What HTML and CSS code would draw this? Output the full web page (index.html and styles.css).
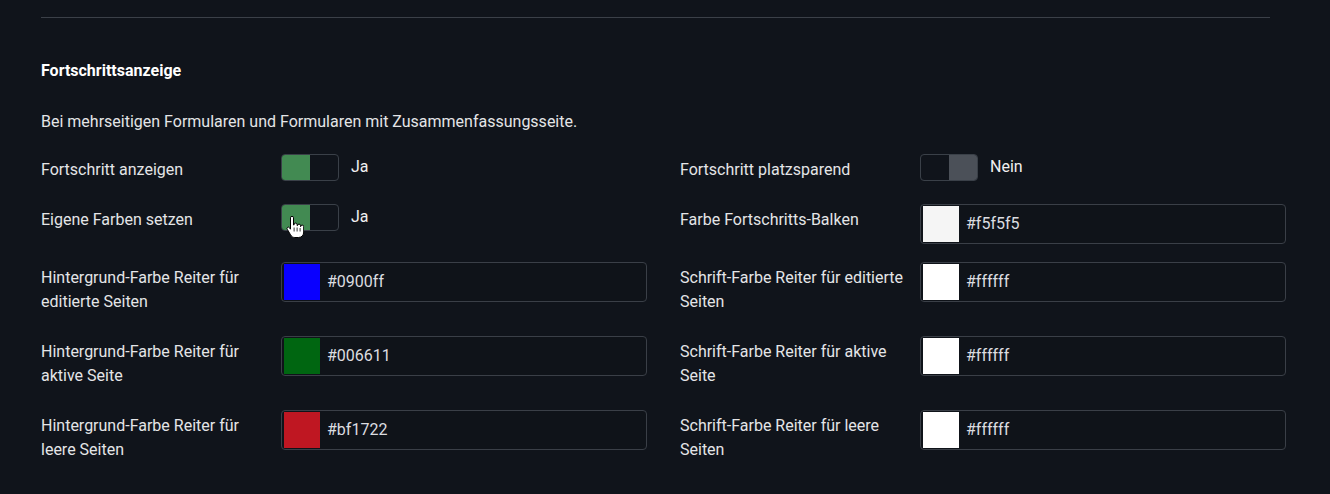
FILE: index.html
```html
<!DOCTYPE html>
<html lang="de">
<head>
  <meta charset="UTF-8" />
  <meta name="viewport" content="width=device-width, initial-scale=1.0"/>
  <title>Fortschrittsanzeige</title>
  <link rel="stylesheet" href="styles.css">
</head>
<body>

  <main class="page">
    <hr class="divider">

    <h3 class="section-title">Fortschrittsanzeige</h3>
    <p class="section-desc">Bei mehrseitigen Formularen und Formularen mit Zusammenfassungsseite.</p>

    <div class="form-row">
      <div class="field">
        <label class="field-label">Fortschritt anzeigen</label>
        <div class="field-control">
          <span class="switch on"><span class="switch-on"></span><span class="switch-off"></span></span>
          <span class="switch-text">Ja</span>
        </div>
      </div>
      <div class="field">
        <label class="field-label">Fortschritt platzsparend</label>
        <div class="field-control">
          <span class="switch off"><span class="switch-on"></span><span class="switch-off"></span></span>
          <span class="switch-text">Nein</span>
        </div>
      </div>
    </div>

    <div class="form-row">
      <div class="field">
        <label class="field-label">Eigene Farben setzen</label>
        <div class="field-control">
          <span class="switch on"><span class="switch-on"></span><span class="switch-off"></span></span>
          <span class="switch-text">Ja</span>
          <!-- mouse pointer from the screenshot -->
          <svg class="cursor" width="18" height="23" viewBox="0 0 18 23">
            <path d="M4.5 1.8a1.5 1.5 0 0 1 3 0V9h.6V8.6a1.5 1.5 0 0 1 3 0v1h.4a1.5 1.5 0 0 1 3 0v1h.2a1.5 1.5 0 0 1 3 0V16c0 3.2-2 5.5-5.2 5.5H8.8c-2 0-3.2-1-4.2-2.6L1.3 13.3a1.3 1.3 0 0 1 2.1-1.6L4.5 13.2Z" fill="#fff" stroke="#000" stroke-width="1"/>
            <path d="M8.1 11.5v4M11.1 11.5v4M14.1 12v3.5" stroke="#000" stroke-width=".8"/>
          </svg>
        </div>
      </div>
      <div class="field">
        <label class="field-label">Farbe Fortschritts-Balken</label>
        <div class="field-control">
          <div class="color-input">
            <span class="swatch" style="background:#f5f5f5"></span>
            <span class="color-value">#f5f5f5</span>
          </div>
        </div>
      </div>
    </div>

    <div class="form-row">
      <div class="field">
        <label class="field-label">Hintergrund-Farbe Reiter für editierte Seiten</label>
        <div class="field-control">
          <div class="color-input">
            <span class="swatch" style="background:#0900ff"></span>
            <span class="color-value">#0900ff</span>
          </div>
        </div>
      </div>
      <div class="field">
        <label class="field-label">Schrift-Farbe Reiter für editierte Seiten</label>
        <div class="field-control">
          <div class="color-input">
            <span class="swatch" style="background:#ffffff"></span>
            <span class="color-value">#ffffff</span>
          </div>
        </div>
      </div>
    </div>

    <div class="form-row">
      <div class="field">
        <label class="field-label">Hintergrund-Farbe Reiter für aktive Seite</label>
        <div class="field-control">
          <div class="color-input">
            <span class="swatch" style="background:#006611"></span>
            <span class="color-value">#006611</span>
          </div>
        </div>
      </div>
      <div class="field">
        <label class="field-label">Schrift-Farbe Reiter für aktive Seite</label>
        <div class="field-control">
          <div class="color-input">
            <span class="swatch" style="background:#ffffff"></span>
            <span class="color-value">#ffffff</span>
          </div>
        </div>
      </div>
    </div>

    <div class="form-row">
      <div class="field">
        <label class="field-label">Hintergrund-Farbe Reiter für leere Seiten</label>
        <div class="field-control">
          <div class="color-input">
            <span class="swatch" style="background:#bf1722"></span>
            <span class="color-value">#bf1722</span>
          </div>
        </div>
      </div>
      <div class="field">
        <label class="field-label">Schrift-Farbe Reiter für leere Seiten</label>
        <div class="field-control">
          <div class="color-input">
            <span class="swatch" style="background:#ffffff"></span>
            <span class="color-value">#ffffff</span>
          </div>
        </div>
      </div>
    </div>
  </main>

</body>
</html>
```

FILE: styles.css
```css
* {
  box-sizing: border-box;
}

body {
  font-family: Roboto, "Liberation Sans", sans-serif;
  font-size: 16px;
  line-height: 24px;
  margin: 0;
  padding: 0;
  background-color: #10141b;
  color: #e4e5e7;
}

.page {
  width: 1286px;
  padding: 17px 0 0 41px;
}

.divider {
  margin: 0 16px 0 0;
  border: none;
  border-top: 1px solid #3b4048;
}

.section-title {
  margin: 41px 0 0;
  font-size: 16px;
  font-weight: bold;
  line-height: 24px;
  color: #fff;
}

.section-desc {
  margin: 27px 0 20px;
}

.form-row {
  display: grid;
  grid-template-columns: 1fr 1fr;
  column-gap: 33px;
  margin-bottom: 18px;
}

.field {
  display: grid;
  grid-template-columns: 240px 1fr;
  align-items: start;
}

.field-label {
  padding: 4px 12px 4px 0;
}

.field-control {
  display: flex;
  align-items: center;
  gap: 12px;
  position: relative;
}

/* toggle switch */
.switch {
  display: flex;
  width: 58px;
  height: 27px;
  border: 1px solid #3a4048;
  border-radius: 4px;
  overflow: hidden;
}

.switch-on,
.switch-off {
  flex: 1;
}

.switch.on .switch-on {
  background-color: #428a52;
}

.switch.off .switch-off {
  background-color: #4b5058;
}

.switch-text {
  color: #f0f0f0;
  margin-top: -1px;
}

.cursor {
  position: absolute;
  left: 5px;
  top: 12px;
}

/* colour picker input */
.color-input {
  display: flex;
  align-items: center;
  gap: 7px;
  width: 100%;
  height: 40px;
  padding: 0 2px;
  border: 1px solid #3a3f47;
  border-radius: 4px;
  background-color: #0f1319;
}

.swatch {
  width: 36px;
  height: 36px;
}

.color-value {
  color: #dcdde0;
}
```
